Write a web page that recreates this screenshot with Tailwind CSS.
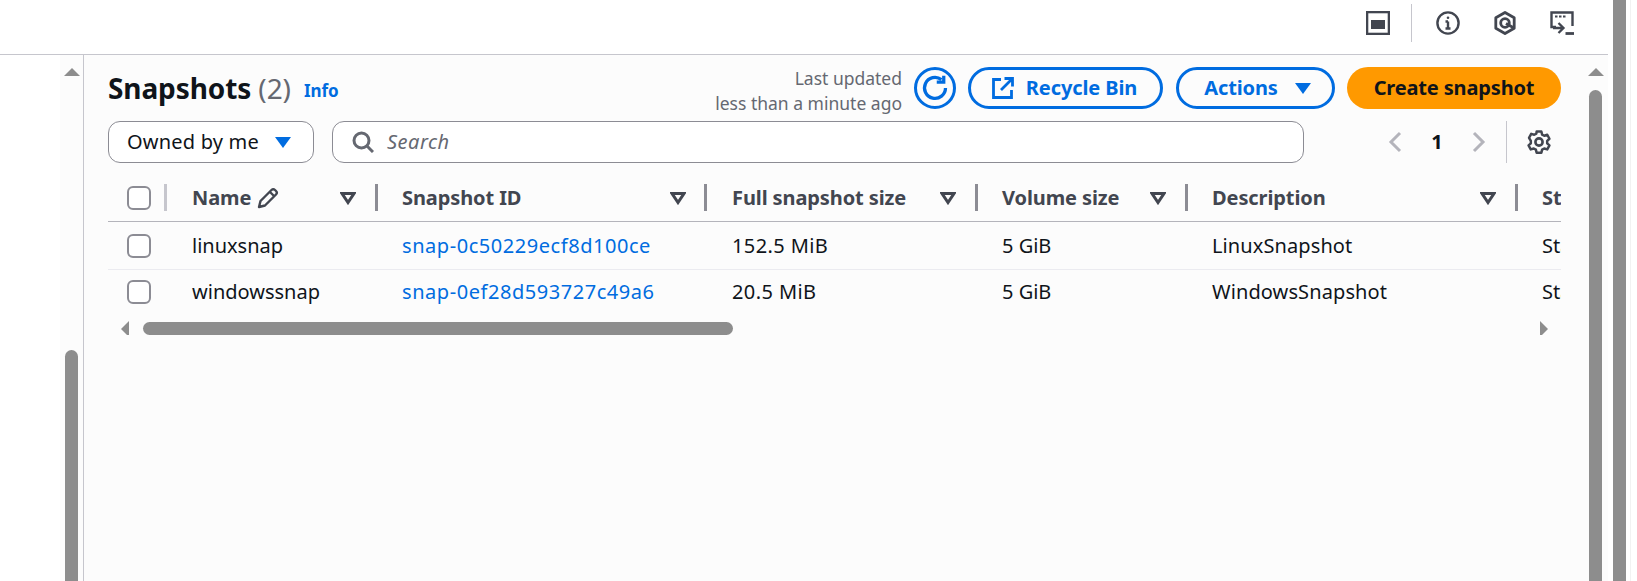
<!DOCTYPE html>
<html><head><meta charset="utf-8">
<script src="https://cdn.jsdelivr.net/npm/@tailwindcss/browser@4"></script>
</head>
<body class="bg-white">
<div class="flex w-[1637px] h-[581px] overflow-hidden font-['Noto_Sans',sans-serif] text-[#0f141a]">
  <div class="w-[1608px] flex flex-col">
    <header class="h-[55px] shrink-0 border-b border-[#c6c6cd] bg-white flex items-start text-[#424650]">
      <div class="ml-auto flex items-center h-[38px] mt-[4px] mr-[34px]">
        <svg class="w-6 h-6" viewBox="0 0 24 24" fill="none"><rect x="1" y="1" width="22" height="22" stroke="#424650" stroke-width="2.6"/><rect x="5" y="9" width="14" height="9" fill="#424650"/></svg>
        <div class="w-px h-[38px] bg-[#c6c6cd] ml-[21px] mr-[24px]"></div>
        <svg class="w-6 h-6" viewBox="0 0 24 24" fill="none" stroke="#424650" stroke-width="2.4"><circle cx="12" cy="12" r="10.6"/><path d="M12 10.500v7M9.500 17.500h5M9.500 10.500H12"/><circle cx="12" cy="6.800" r="1.300" fill="#424650" stroke="none"/></svg>
        <svg class="w-6 h-6 ml-[33px]" viewBox="0 0 24 24" fill="none" stroke="#424650" stroke-width="2.8" stroke-linejoin="round"><path d="M12 1.500l9.200 5.300v10.400L12 22.500l-9.200-5.300V6.800z"/><circle cx="12" cy="12" r="4.300" stroke-width="2.800"/><path d="M13 12.500l7.500 4.300" stroke-width="2.800"/></svg>
        <svg class="w-6 h-6 ml-[33px]" viewBox="0 0 24 24" fill="none" stroke="#424650" stroke-width="2.400"><path d="M6 16H1.500V1.500h21V15"/><path d="M5 5.500h2.500M9 5.500h2.500M13 5.500h2.500" stroke-width="2.200"/><path d="M3 17h10M8.500 12l5 5-5 5" stroke-width="2.300"/><path d="M15.500 22.500H24" stroke-width="2.800"/></svg>
      </div>
    </header>
    <div class="flex flex-1 min-h-0">
      <aside class="w-[60px] shrink-0 bg-white"></aside>
      <div class="w-[23px] shrink-0 bg-[#fcfcfc] relative flex flex-col items-center">
        <div class="mt-[13px] w-0 h-0 border-x-[8px] border-x-transparent border-b-[8px] border-b-[#8d8d8d]"></div>
        <div class="mt-[274px] w-[13px] flex-1 rounded-t-[7px] bg-[#8d8d8d] -mb-px"></div>
      </div>
      <main class="w-[1500px] shrink-0 border-l border-[#c6c6cd] bg-[#fcfcfc] pl-[24px] pt-[12px] pr-[22px]">
        <div class="h-[42px] flex items-center">
          <h1 class="text-[28px] leading-[42px] font-bold tracking-[-0.1px] whitespace-nowrap">Snapshots <span class="font-normal text-[#656871]">(2)</span></h1>
          <a class="ml-[13px] mt-[5px] text-[17px] font-bold text-[#006ce0]">Info</a>
          <div class="ml-auto text-right text-[#656871] text-[17.5px] leading-[25px] mr-[12px] mt-[5px]"><div>Last updated</div><div>less than a minute ago</div></div>
          <button class="w-[42px] h-[42px] rounded-full border-[3px] border-[#006ce0] flex items-center justify-center">
            <svg class="w-7 h-7" viewBox="0 0 24 24" fill="none" stroke="#006ce0" stroke-width="2.800"><path d="M21 12a9 9 0 1 1-3.500-7.200"/><path d="M19.500 1.500v5.500h-6"/></svg>
          </button>
          <button class="ml-[12px] w-[195px] h-[42px] rounded-full border-[3px] border-[#006ce0] text-[#006ce0] font-bold text-[20px] tracking-[-0.1px] flex items-center justify-center gap-[12px] pr-[2px]">
            <svg class="w-[22px] h-[22px]" viewBox="0 0 22 22" fill="none" stroke="#006ce0" stroke-width="2.800"><path d="M9 2.500H1.500v18h18V13"/><path d="M9 13L20 2M12.500 1.500h8v8"/></svg>
            Recycle Bin
          </button>
          <button class="ml-[13px] w-[159px] h-[42px] rounded-full border-[3px] border-[#006ce0] text-[#006ce0] font-bold text-[20px] tracking-[-0.15px] flex items-center justify-center gap-[17px] pl-[4px]">
            Actions
            <span class="w-0 h-0 border-x-[8px] border-x-transparent border-t-[11px] border-t-[#006ce0]"></span>
          </button>
          <button class="ml-[12px] w-[214px] h-[42px] rounded-full bg-[#ff9900] font-bold text-[20px] tracking-[-0.15px] flex items-center justify-center">Create snapshot</button>
        </div>
        <div class="h-[42px] mt-[12px] flex items-center">
          <div class="w-[206px] h-[42px] rounded-[12px] border border-[#8c8c94] bg-white flex items-center pl-[18px] text-[20px] tracking-[0.2px]">
            Owned by me
            <span class="ml-[16px] w-0 h-0 border-x-[8px] border-x-transparent border-t-[11px] border-t-[#006ce0]"></span>
          </div>
          <div class="ml-[18px] w-[972px] h-[42px] rounded-[12px] border border-[#8c8c94] bg-white flex items-center pl-[19px] text-[20px] tracking-[0.5px] italic text-[#656871]">
            <svg class="w-[22px] h-[22px] mr-[13px]" viewBox="0 0 22 22" fill="none" stroke="#656871" stroke-width="3"><circle cx="9.500" cy="9.500" r="7.500"/><path d="M15 15l6 6"/></svg>
            Search
          </div>
          <div class="ml-[84px] flex items-center">
            <svg class="w-[14px] h-[24px]" viewBox="0 0 14 24" fill="none" stroke="#b4b4bb" stroke-width="3"><path d="M12 3L3 12l9 9"/></svg>
            <span class="ml-[29px] w-[12px] text-center font-bold text-[20px]">1</span>
            <svg class="ml-[29px] w-[14px] h-[24px]" viewBox="0 0 14 24" fill="none" stroke="#b4b4bb" stroke-width="3"><path d="M2 3l9 9-9 9"/></svg>
            <div class="ml-[20px] w-px h-[42px] bg-[#c6c6cd]"></div>
            <svg class="ml-[20px] w-6 h-6" viewBox="0 0 24 24" fill="none" stroke="#424650" stroke-width="2.600" stroke-linejoin="round"><path d="M9.500 1.500h5l.8 3.200 2.200 1.200 3.200-1 2.300 4.200-2.400 2.200v2.600l2.400 2.200-2.300 4.200-3.200-1-2.200 1.200-.8 3.200h-5l-.8-3.200-2.200-1.200-3.200 1-2.300-4.200 2.400-2.200v-2.600L1.500 8.100l2.300-4.200 3.200 1 2.200-1.200z" transform="translate(12 12) scale(.95) translate(-12 -12.500)"/><circle cx="12" cy="12" r="3.600"/></svg>
          </div>
        </div>
        <div class="mt-[13px] w-[1453px] overflow-hidden">
          <div class="grid grid-cols-[58px_211px_329px_271px_210px_330px_100px]">
            <!-- Header -->
            <div class="h-[46px] pb-[2px] border-b border-[#b4b4bb] flex items-center pl-[19px] justify-between">
              <span class="w-[24px] h-[24px] rounded-[6px] border-2 border-[#8c8c94] bg-white"></span>
              <span class="w-[3px] h-[27px] bg-[#c6c6cd] mr-[-1px]"></span>
            </div>
            <div class="h-[46px] pb-[2px] border-b border-[#b4b4bb] flex items-center pl-[26px] text-[#424650] font-bold text-[20px] tracking-[-0.1px] whitespace-nowrap">
              Name
              <svg class="ml-[6px] w-[22px] h-[22px]" viewBox="0 0 22 22" fill="none" stroke="#424650" stroke-width="2.400" stroke-linejoin="round"><path d="M2 20l1.500-6L14.500 3a2.500 2.500 0 0 1 3.500 0l1 1a2.500 2.500 0 0 1 0 3.500L8 18.500zM13 5l4.500 4.500"/></svg>
              <svg class="ml-auto w-[16px] h-[14px]" viewBox="0 0 16 14" fill="none" stroke="#424650" stroke-width="3"><path d="M2 2.500h12l-6 9z"/></svg>
              <span class="ml-[19px] w-[3px] h-[27px] bg-[#8c8c94] mr-[-1px]"></span>
            </div>
            <div class="h-[46px] pb-[2px] border-b border-[#b4b4bb] flex items-center pl-[25px] text-[#424650] font-bold text-[20px] tracking-[-0.1px] whitespace-nowrap">
              Snapshot ID
              <svg class="ml-auto w-[16px] h-[14px]" viewBox="0 0 16 14" fill="none" stroke="#424650" stroke-width="3"><path d="M2 2.500h12l-6 9z"/></svg>
              <span class="ml-[18px] w-[3px] h-[27px] bg-[#8c8c94] mr-[-1px]"></span>
            </div>
            <div class="h-[46px] pb-[2px] border-b border-[#b4b4bb] flex items-center pl-[26px] text-[#424650] font-bold text-[20px] tracking-[-0.1px] whitespace-nowrap">
              Full snapshot size
              <svg class="ml-auto w-[16px] h-[14px]" viewBox="0 0 16 14" fill="none" stroke="#424650" stroke-width="3"><path d="M2 2.500h12l-6 9z"/></svg>
              <span class="ml-[19px] w-[3px] h-[27px] bg-[#8c8c94] mr-[-1px]"></span>
            </div>
            <div class="h-[46px] pb-[2px] border-b border-[#b4b4bb] flex items-center pl-[25px] text-[#424650] font-bold text-[20px] tracking-[-0.1px] whitespace-nowrap">
              Volume size
              <svg class="ml-auto w-[16px] h-[14px]" viewBox="0 0 16 14" fill="none" stroke="#424650" stroke-width="3"><path d="M2 2.500h12l-6 9z"/></svg>
              <span class="ml-[19px] w-[3px] h-[27px] bg-[#8c8c94] mr-[-1px]"></span>
            </div>
            <div class="h-[46px] pb-[2px] border-b border-[#b4b4bb] flex items-center pl-[25px] text-[#424650] font-bold text-[20px] tracking-[-0.1px] whitespace-nowrap">
              Description
              <svg class="ml-auto w-[16px] h-[14px]" viewBox="0 0 16 14" fill="none" stroke="#424650" stroke-width="3"><path d="M2 2.500h12l-6 9z"/></svg>
              <span class="ml-[19px] w-[3px] h-[27px] bg-[#8c8c94] mr-[-1px]"></span>
            </div>
            <div class="h-[46px] pb-[2px] border-b border-[#b4b4bb] flex items-center pl-[25px] text-[#424650] font-bold text-[20px] whitespace-nowrap">Status</div>
            <!-- Row 1 -->
            <div class="h-[48px] border-b border-[#ebebf0] flex items-center pl-[19px]"><span class="w-[24px] h-[24px] rounded-[6px] border-2 border-[#8c8c94] bg-white"></span></div>
            <div class="h-[48px] border-b border-[#ebebf0] flex items-center pl-[26px] text-[20px]">linuxsnap</div>
            <div class="h-[48px] border-b border-[#ebebf0] flex items-center pl-[25px] text-[20px] tracking-[0.55px] text-[#006ce0] whitespace-nowrap">snap-0c50229ecf8d100ce</div>
            <div class="h-[48px] border-b border-[#ebebf0] flex items-center pl-[26px] text-[20px] tracking-[0.4px]">152.5 MiB</div>
            <div class="h-[48px] border-b border-[#ebebf0] flex items-center pl-[25px] text-[20px]">5 GiB</div>
            <div class="h-[48px] border-b border-[#ebebf0] flex items-center pl-[25px] text-[20px] tracking-[0.1px]">LinuxSnapshot</div>
            <div class="h-[48px] border-b border-[#ebebf0] flex items-center pl-[25px] text-[20px] whitespace-nowrap">Standard</div>
            <!-- Row 2 -->
            <div class="h-[43px] flex items-center pl-[19px]"><span class="w-[24px] h-[24px] rounded-[6px] border-2 border-[#8c8c94] bg-white"></span></div>
            <div class="h-[43px] flex items-center pl-[26px] text-[20px]">windowssnap</div>
            <div class="h-[43px] flex items-center pl-[25px] text-[20px] tracking-[0.55px] text-[#006ce0] whitespace-nowrap">snap-0ef28d593727c49a6</div>
            <div class="h-[43px] flex items-center pl-[26px] text-[20px] tracking-[0.4px]">20.5 MiB</div>
            <div class="h-[43px] flex items-center pl-[25px] text-[20px]">5 GiB</div>
            <div class="h-[43px] flex items-center pl-[25px] text-[20px] tracking-[0.1px]">WindowsSnapshot</div>
            <div class="h-[43px] flex items-center pl-[25px] text-[20px] whitespace-nowrap">Standard</div>
          </div>
          <div class="h-[13px] mt-[9px] flex items-center pl-[13px] pr-[13px]">
            <span class="w-0 h-0 border-y-[8px] border-y-transparent border-r-[8px] border-r-[#8d8d8d]"></span>
            <span class="ml-[14px] w-[590px] h-[13px] rounded-full bg-[#8d8d8d]"></span>
            <span class="ml-auto w-0 h-0 border-y-[8px] border-y-transparent border-l-[8px] border-l-[#8d8d8d]"></span>
          </div>
        </div>
      </main>
      <div class="w-[25px] shrink-0 bg-[#fcfcfc] flex flex-col items-center">
        <div class="mt-[13px] w-0 h-0 border-x-[8px] border-x-transparent border-b-[8px] border-b-[#8d8d8d]"></div>
        <div class="mt-[14px] w-[13px] flex-1 rounded-t-[7px] bg-[#8d8d8d]"></div>
      </div>
    </div>
  </div>
  <div class="w-[29px] shrink-0 bg-white flex">
    <div class="ml-[5px] w-[13px] h-full bg-[#8d8d8d]"></div>
    <div class="ml-[4px] w-px h-full bg-[#f2f2f2]"></div>
  </div>
</div>
</body></html>
